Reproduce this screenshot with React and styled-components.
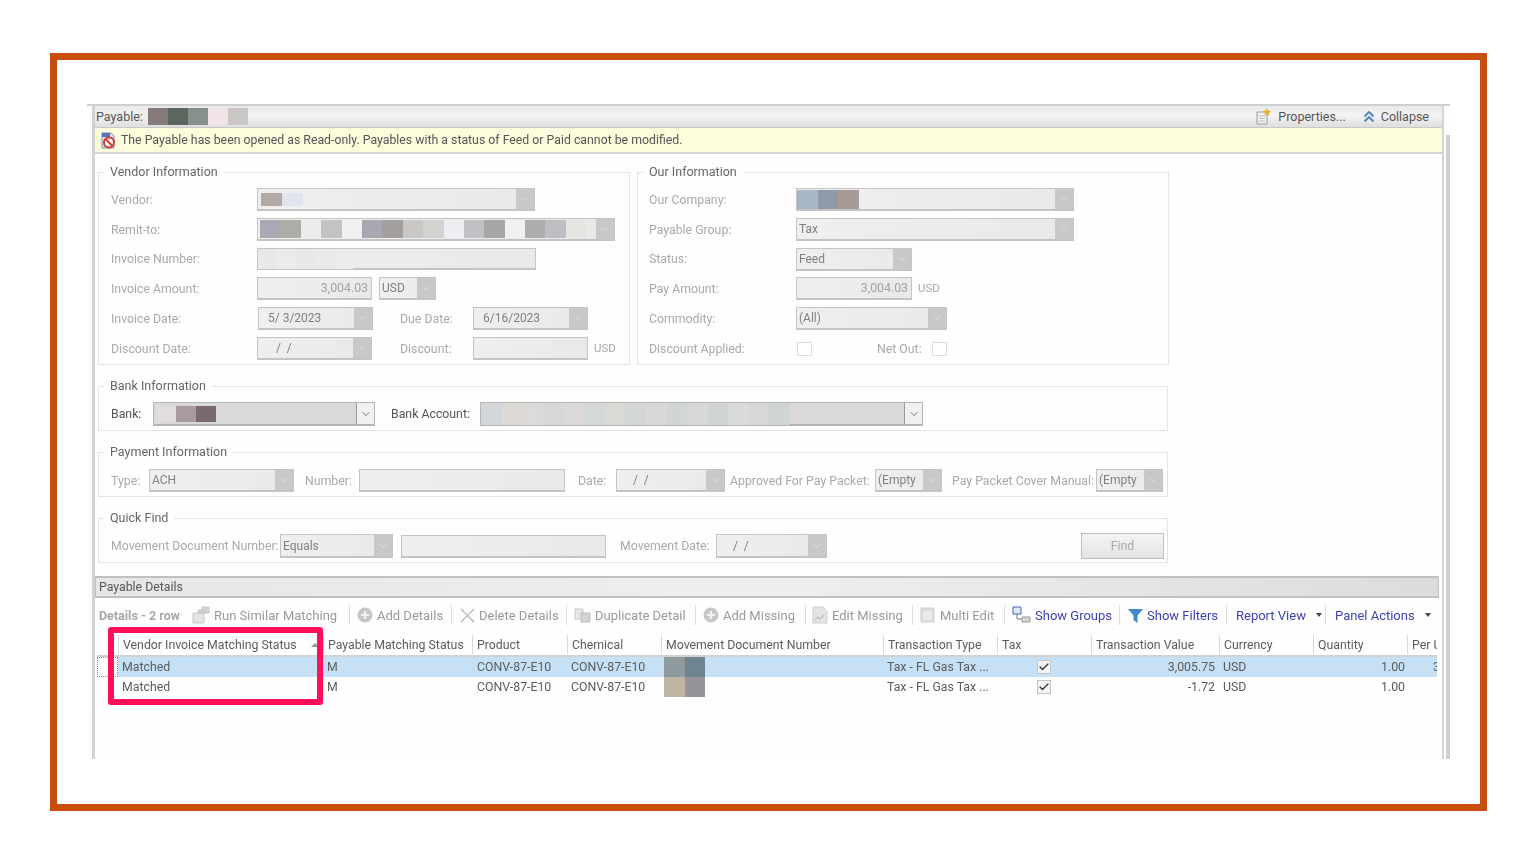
import React from 'react';
import styled, { createGlobalStyle, css } from 'styled-components';
import { ChevronDown, Check } from 'lucide-react';

const COLUMNS = '21px 205px 149px 95px 94px 222px 114px 94px 128px 94px 94px 30px';

const GlobalStyle = createGlobalStyle`
  html, body {
    margin: 0;
    background: #fff;
    font-family: Roboto, "Noto Sans", "Liberation Sans", sans-serif;
    font-size: 12px;
  }
  * { box-sizing: border-box; }
`;

const offset = css`
  margin-left: ${(p) => p.$ml || 0}px;
`;

const Frame = styled.div`
  width: 1437px;
  height: 758px;
  margin: 53px 0 0 50px;
  border: 7px solid #c94d0d;
  padding: 44px 0 0 30px;
  background: #fff;
`;

const Window = styled.div`
  position: relative;
  width: 1363px;
  height: 655px;
  overflow: hidden;
  background: #fefefe;
`;

const WindowBody = styled.div`
  display: flex;
  height: 100%;
  padding-left: 5px;
  border-top: 2px solid #cfcfcf;
  filter: blur(0.4px);
`;

const Panel = styled.div`
  width: 1352px;
  height: 100%;
  border-left: 3px solid #d2d2d2;
  border-right: 2px solid #d4d4d4;
  display: flex;
  flex-direction: column;
`;

const ScrollEdge = styled.div`
  width: 4px;
  margin: 29px 0 0 2px;
  background: #d0d0d0;
`;

const TitleBar = styled.div`
  height: 22px;
  display: flex;
  align-items: center;
  padding: 0 13px 0 1px;
  color: #555;
  background: linear-gradient(#e9e9e9, #f3f3f3 45%, #dedede);
  border-bottom: 1px solid #c9c9c9;
`;

const TitleText = styled.span`
  width: 53px;
  font-size: 12.5px;
`;

const TitleAction = styled.span`
  display: flex;
  align-items: center;
  gap: 6px;
  margin-left: ${(p) => p.$ml || 0}px;
  font-size: 12.5px;
`;

const PixRow = styled.span`
  display: flex;
  flex: none;
  height: ${(p) => p.$h || 16}px;
`;

const Pix = styled.span`
  display: block;
  flex: none;
  width: ${(p) => p.$w}px;
  background: ${(p) => p.$c};
`;

const Banner = styled.div`
  height: 26px;
  display: flex;
  align-items: center;
  gap: 4px;
  padding-left: 5px;
  color: #555;
  font-size: 12.3px;
  background: #fdfdde;
  border-bottom: 2px solid #d6d6d0;
`;

const Form = styled.div`
  padding: 11px 0 0 3px;
  display: flex;
  flex-direction: column;
`;

const TopGroups = styled.div`
  display: flex;
  gap: 7px;
`;

const Group = styled.fieldset`
  margin: ${(p) => (p.$first ? 0 : '14px 0 0')};
  width: ${(p) => p.$w || 1070}px;
  min-width: 0;
  padding: ${(p) => p.$pt || 9}px 3px ${(p) => p.$pb || 4}px ${(p) => p.$pl || 12}px;
  border: 1px solid #e3e3e3;
`;

const Legend = styled.legend`
  margin-left: ${(p) => p.$ml || -7}px;
  padding: 0 6px;
  height: 14px;
  line-height: 14px;
  color: #666;
  font-size: 12.5px;
`;

const FieldRow = styled.div`
  height: ${(p) => p.$h || 23}px;
  margin-bottom: ${(p) => (p.$last ? 0 : 7)}px;
  display: flex;
  align-items: center;
`;

const Label = styled.span`
  ${offset}
  flex: none;
  width: ${(p) => p.$w}px;
  color: ${(p) => (p.$dark ? '#555' : '#a9a9a9')};
  font-size: 12.3px;
  white-space: nowrap;
`;

const Unit = styled.span`
  ${offset}
  color: #a9a9a9;
  font-size: 11.5px;
  transform: translateY(-1px);
`;

const Control = styled.div`
  ${offset}
  flex: none;
  width: ${(p) => p.$w}px;
  height: ${(p) => p.$h || 23}px;
  display: flex;
  align-items: center;
  border: 1px solid ${(p) => (p.$dark ? '#b5b5b5' : '#c4c4c4')};
  border-bottom-width: 2px;
  background: ${(p) => (p.$dark ? '#d9d9d9' : 'linear-gradient(90deg, #efefef, #e9e9e9)')};
`;

const Value = styled.span`
  padding-left: ${(p) => p.$pad ?? 2}px;
  color: #808080;
  font-size: 12px;
  white-space: pre;
`;

const Amount = styled.span`
  margin-left: auto;
  padding-right: 3px;
  color: #a3a3a3;
  font-size: 12.3px;
`;

const Arrow = styled.span`
  margin-left: auto;
  flex: none;
  align-self: stretch;
  width: 18px;
  display: flex;
  align-items: center;
  justify-content: center;
  color: ${(p) => (p.$dark ? '#444' : '#e6e6e6')};
  background: ${(p) => (p.$dark ? '#f1f1f1' : '#c8c8c8')};
  border-left: ${(p) => (p.$dark ? '1px solid #999' : 'none')};
`;

const CheckBox = styled.span`
  ${offset}
  flex: none;
  width: 15px;
  height: 14px;
  border: 1px solid #dcdcdc;
  background: #fff;
`;

const FindButton = styled.button`
  margin-left: auto;
  width: 83px;
  height: 26px;
  padding: 0;
  font: inherit;
  font-size: 12.3px;
  color: #aaa;
  border: 1px solid #bdbdbd;
  background: linear-gradient(#f4f4f4, #e4e4e4);
`;

const DetailsBar = styled.div`
  margin-top: 13px;
  height: 22px;
  width: 1344px;
  display: flex;
  align-items: center;
  padding-left: 3px;
  color: #555;
  font-size: 12.3px;
  background: linear-gradient(90deg, #e6e6e6, #efefef 50%, #dcdcdc);
  border: 1px solid #c0c0c0;
  border-width: 2px 1px;
`;

const Toolbar = styled.div`
  height: 34px;
  margin-bottom: 3px;
  padding-left: 4px;
  display: flex;
  align-items: center;
  font-size: 13px;
  white-space: nowrap;
`;

const ToolCount = styled.span`
  width: 93px;
  font-weight: 700;
  color: #a2a8ae;
  font-size: 12.5px;
`;

const Tool = styled.span`
  flex: none;
  width: ${(p) => p.$w}px;
  height: 20px;
  padding-left: ${(p) => p.$pl ?? 7}px;
  display: flex;
  align-items: center;
  gap: 4px;
  color: ${(p) => (p.$link ? '#4141b4' : '#9a9a9a')};
  border-right: ${(p) => (p.$last ? 'none' : '1px solid #ddd')};
`;

const Caret = styled.span`
  margin-left: 6px;
  border: 3px solid transparent;
  border-top: 4px solid #444;
  border-bottom: 0;
`;

const Table = styled.div`
  width: 1340px;
  margin-left: 2px;
  overflow: hidden;
  color: #5c5c5c;
`;

const HeaderRow = styled.div`
  display: grid;
  grid-template-columns: ${COLUMNS};
  height: 22px;
  padding-bottom: 1px;
  border-bottom: 2px solid #d2d2d2;
`;

const HeaderCell = styled.div`
  display: flex;
  align-items: center;
  padding: 0 8px 0 4px;
  overflow: hidden;
  white-space: nowrap;
  font-size: 12.3px;
  border-left: ${(p) => (p.$plain ? 'none' : '1px solid #d8d8d8')};
`;

const SortMark = styled.span`
  margin-left: auto;
  margin-right: -4px;
  border: 4px solid transparent;
  border-bottom: 4px solid #999;
  border-top: 0;
`;

const Row = styled.div`
  display: grid;
  grid-template-columns: ${COLUMNS};
  height: 20px;
  & > *:not(:first-child) {
    background: ${(p) => (p.$selected ? '#c6e0f5' : 'transparent')};
  }
`;

const Cell = styled.div`
  display: flex;
  align-items: center;
  justify-content: ${(p) => p.$justify || 'flex-start'};
  padding: 0 ${(p) => p.$pr ?? 4}px 0 ${(p) => p.$pl ?? 4}px;
  overflow: hidden;
  white-space: nowrap;
  font-size: 12.3px;
`;

const RowMarker = styled.div`
  border: 1px dotted ${(p) => (p.$on ? '#888' : 'transparent')};
`;

const TableCheck = styled.span`
  width: 14px;
  height: 14px;
  display: flex;
  align-items: center;
  justify-content: center;
  color: #333;
  background: #f4f4f4;
  border: 1px solid #c4c4c4;
`;

const Highlight = styled.div`
  position: absolute;
  left: 21px;
  top: 523px;
  width: 215px;
  height: 78px;
  border: 6px solid #ff1059;
  border-radius: 3px;
  pointer-events: none;
`;

const IconSvg = styled.svg`
  flex: none;
  display: block;
`;

const WarnIcon = () => (
  <IconSvg width="17" height="17" viewBox="0 0 17 17">
    <path d="M2 1h9l3 3v12H2z" fill="#dfe6f2" stroke="#7f8fb5" />
    <path d="M2 1h8v4H2z" fill="#5b73b5" />
    <circle cx="9" cy="10.5" r="5" fill="#fff" stroke="#d83a2c" strokeWidth="2" />
    <path d="M5.5 7l7 7" stroke="#d83a2c" strokeWidth="2" />
  </IconSvg>
);

const PropertiesIcon = () => (
  <IconSvg width="17" height="17" viewBox="0 0 17 17">
    <path d="M2 4h10v12H2z" fill="#f3f3f3" stroke="#9a9a9a" />
    <path d="M4 8h6M4 10.5h6M4 13h6" stroke="#bbb" />
    <path d="M12 0l1.2 2.6 2.8.4-2 2 .5 2.8-2.5-1.4-2.5 1.4.5-2.8-2-2 2.800-.4z" fill="#e5b52c" />
  </IconSvg>
);

const CollapseIcon = () => (
  <IconSvg width="12" height="13" viewBox="0 0 12 13">
    <path d="M1.500 6.500L6 2l4.500 4.500M1.500 11.500L6 7l4.500 4.500" fill="none" stroke="#4d83b8" strokeWidth="1.800" />
  </IconSvg>
);

const RunIcon = () => (
  <IconSvg width="18" height="18" viewBox="0 0 18 18">
    <path d="M1 7h11v10H1z" fill="#e4e4e4" stroke="#c9c9c9" />
    <path d="M6 4h7v3H6zM10 1h7v6h-7z" fill="#d4d4d4" stroke="#c4c4c4" />
  </IconSvg>
);

const PlusIcon = () => (
  <IconSvg width="16" height="16" viewBox="0 0 16 16">
    <circle cx="8" cy="8" r="7.500" fill="#c6c6c6" />
    <path d="M8 4v8M4 8h8" stroke="#f2f2f2" strokeWidth="2.200" />
  </IconSvg>
);

const CrossIcon = () => (
  <IconSvg width="15" height="15" viewBox="0 0 15 15">
    <path d="M1 1l13 13M14 1L1 14" stroke="#bdbdbd" strokeWidth="1.500" />
  </IconSvg>
);

const DuplicateIcon = () => (
  <IconSvg width="17" height="15" viewBox="0 0 17 15">
    <path d="M1 1h8v10H1z" fill="#e8e8e8" stroke="#c8c8c8" />
    <path d="M7 5h9v9H7z" fill="#d2d2d2" stroke="#bdbdbd" />
  </IconSvg>
);

const EditIcon = () => (
  <IconSvg width="16" height="18" viewBox="0 0 16 18">
    <path d="M1 1h10l4 4v12H1z" fill="#e4e4e4" stroke="#cecece" />
    <path d="M3 14l3-3 2 2 4-4" fill="none" stroke="#c2c2c2" strokeWidth="1.400" />
  </IconSvg>
);

const MultiIcon = () => (
  <IconSvg width="16" height="16" viewBox="0 0 16 16">
    <path d="M1 1h13v14H1z" fill="#dcdcdc" stroke="#cfcfcf" />
    <path d="M3 4h9v9H3z" fill="#e9e9e9" />
  </IconSvg>
);

const GroupsIcon = () => (
  <IconSvg width="19" height="18" viewBox="0 0 19 18">
    <path d="M1 1h8v7H1z" fill="#dfe7f7" stroke="#4a63b5" />
    <path d="M5 8v5h5" fill="none" stroke="#777" />
    <path d="M10 11h8v5h-8z" fill="#d6d6d6" stroke="#999" />
  </IconSvg>
);

const FilterIcon = () => (
  <IconSvg width="15" height="15" viewBox="0 0 15 15">
    <path d="M0 1h15L9.500 7.500V15L5.500 12V7.500z" fill="#3f88cc" />
  </IconSvg>
);

const SmallCheck = () => <Check size={12} strokeWidth={2.5} />;

const Combo = ({ w, ml, h, dark, value, pad, children }) => (
  <Control $w={w} $ml={ml} $h={h} $dark={dark}>
    {children}
    {value !== undefined && <Value $pad={pad}>{value}</Value>}
    <Arrow $dark={dark}>
      <ChevronDown size={12} strokeWidth={1.5} />
    </Arrow>
  </Control>
);

const Blocks = ({ colors, w, h, ml }) => (
  <PixRow $h={h} style={ml ? { marginLeft: ml } : undefined}>
    {colors.map((c, i) => (
      <Pix key={i} $w={w} $c={c} />
    ))}
  </PixRow>
);

const REMIT = ['#a9a9b6', '#adada8', '#ececec', '#c3c3c2', '#f0f0f0', '#a8a8b3', '#a39f9c', '#c9c8c7', '#d2d2ce', '#eeeef2', '#c1c1c6', '#a8a6a6', '#f0f0f0', '#aeacac', '#bcbec2', '#e4e6e2'];
const INVOICE = ['#e8e8e8', '#ebebeb', '#e6e8ea', '#ebe9ea', '#ecebed'];
const ACCOUNT = ['#d3d7d9', '#dcd9d5', '#dddbd9', '#d6d8d6', '#dbd8d8', '#d4d8d6', '#d9d9d6', '#d2d6d6', '#d8d8d8', '#d1d6d5', '#d6d9d8', '#d0d4d4', '#d9dbdb', '#d6d8d8', '#cfd4d4'];

const TOOLS = [
  { label: 'Add Details', icon: <PlusIcon />, w: 102 },
  { label: 'Delete Details', icon: <CrossIcon />, w: 115, pl: 8 },
  { label: 'Duplicate Detail', icon: <DuplicateIcon />, w: 129 },
  { label: 'Add Missing', icon: <PlusIcon />, w: 110 },
  { label: 'Edit Missing', icon: <EditIcon />, w: 107, pl: 6 },
  { label: 'Multi Edit', icon: <MultiIcon />, w: 92 },
  { label: 'Show Groups', icon: <GroupsIcon />, w: 115, link: true },
  { label: 'Show Filters', icon: <FilterIcon />, w: 107, link: true, pl: 8 },
];

const HEADERS = ['Payable Matching Status', 'Product', 'Chemical', 'Movement Document Number', 'Transaction Type', 'Tax', 'Transaction Value', 'Currency', 'Quantity', 'Per Unit'];

const DetailRow = ({ selected, value, docColors, perUnit }) => (
  <Row $selected={selected}>
    <RowMarker $on={selected} />
    <Cell>Matched</Cell>
    <Cell>M</Cell>
    <Cell $pl={5}>CONV-87-E10</Cell>
    <Cell>CONV-87-E10</Cell>
    <Cell $pl={3}><Blocks colors={docColors} w={20.5} h={20} /></Cell>
    <Cell>Tax - FL Gas Tax ...</Cell>
    <Cell $justify="center"><TableCheck><SmallCheck /></TableCheck></Cell>
    <Cell $justify="flex-end">{value}</Cell>
    <Cell>USD</Cell>
    <Cell $justify="flex-end" $pr={2}>1.00</Cell>
    <Cell $pl={26} $pr={0}>{perUnit}</Cell>
  </Row>
);

const App = () => (
  <>
    <GlobalStyle />
    <Frame>
      <Window>
        <WindowBody>
          <Panel>
            <TitleBar>
              <TitleText>Payable:</TitleText>
              <Blocks colors={['#857b7b', '#5d665e', '#88908f', '#f2e4e6', '#c9c6c3']} w={20} h={17} />
              <TitleAction $ml={1007}><PropertiesIcon />Properties...</TitleAction>
              <TitleAction $ml={17}><CollapseIcon />Collapse</TitleAction>
            </TitleBar>
            <Banner>
              <WarnIcon />
              The Payable has been opened as Read-only. Payables with a status of Feed or Paid cannot be modified.
            </Banner>
            <Form>
              <TopGroups>
                <Group $first $w={532}>
                  <Legend>Vendor Information</Legend>
                  <FieldRow>
                    <Label $w={146}>Vendor:</Label>
                    <Combo w={278}><Blocks colors={['#b5a9a6', '#e2e4ee']} w={21} h={13} ml={3} /></Combo>
                  </FieldRow>
                  <FieldRow>
                    <Label $w={146}>Remit-to:</Label>
                    <Combo w={358}><Blocks colors={REMIT} w={20.400} h={18} ml={2} /></Combo>
                  </FieldRow>
                  <FieldRow $h={22}>
                    <Label $w={146}>Invoice Number:</Label>
                    <Control $w={279} $h={22}><Blocks colors={INVOICE} w={19} h={20} /></Control>
                  </FieldRow>
                  <FieldRow>
                    <Label $w={146}>Invoice Amount:</Label>
                    <Control $w={115}><Amount>3,004.03</Amount></Control>
                    <Combo w={57} ml={7} value="USD" />
                  </FieldRow>
                  <FieldRow>
                    <Label $w={147}>Invoice Date:</Label>
                    <Combo w={115} value="5/ 3/2023" pad={9} />
                    <Label $w={73} $ml={27}>Due Date:</Label>
                    <Combo w={115} value="6/16/2023" pad={9} />
                  </FieldRow>
                  <FieldRow $last>
                    <Label $w={146}>Discount Date:</Label>
                    <Combo w={115} value="  /  /" pad={12} />
                    <Label $w={73} $ml={28}>Discount:</Label>
                    <Control $w={115} />
                    <Unit $ml={6}>USD</Unit>
                  </FieldRow>
                </Group>
                <Group $first $w={532} $pl={11}>
                  <Legend $ml={-6}>Our Information</Legend>
                  <FieldRow>
                    <Label $w={147}>Our Company:</Label>
                    <Combo w={278}><Blocks colors={['#a6b6c5', '#8f99a7', '#a89a97']} w={20.500} h={19} /></Combo>
                  </FieldRow>
                  <FieldRow>
                    <Label $w={147}>Payable Group:</Label>
                    <Combo w={278} value="Tax" />
                  </FieldRow>
                  <FieldRow $h={22}>
                    <Label $w={147}>Status:</Label>
                    <Combo w={116} value="Feed" />
                  </FieldRow>
                  <FieldRow>
                    <Label $w={147}>Pay Amount:</Label>
                    <Control $w={116}><Amount>3,004.03</Amount></Control>
                    <Unit $ml={6}>USD</Unit>
                  </FieldRow>
                  <FieldRow>
                    <Label $w={147}>Commodity:</Label>
                    <Combo w={151} value="(All)" />
                  </FieldRow>
                  <FieldRow $last>
                    <Label $w={147}>Discount Applied:</Label>
                    <CheckBox $ml={1} />
                    <Label $w={55} $ml={65}>Net Out:</Label>
                    <CheckBox />
                  </FieldRow>
                </Group>
              </TopGroups>
              <Group>
                <Legend>Bank Information</Legend>
                <FieldRow $h={24} $last>
                  <Label $w={42} $dark>Bank:</Label>
                  <Combo w={222} h={24} dark><Blocks colors={['#e2dcdc', '#a99a9e', '#7a6a70']} w={20} h={16} ml={2} /></Combo>
                  <Label $w={89} $ml={16} $dark>Bank Account:</Label>
                  <Combo w={443} h={24} dark><Blocks colors={ACCOUNT} w={20.600} h={22} /></Combo>
                </FieldRow>
              </Group>
              <Group $pt={10}>
                <Legend>Payment Information</Legend>
                <FieldRow $last>
                  <Label $w={38}>Type:</Label>
                  <Combo w={145} value="ACH" />
                  <Label $w={54} $ml={11}>Number:</Label>
                  <Control $w={206} />
                  <Label $w={38} $ml={13}>Date:</Label>
                  <Combo w={109} value="  /  /" pad={10} />
                  <Label $w={145} $ml={5}>Approved For Pay Packet:</Label>
                  <Combo w={67} value="(Empty" />
                  <Label $w={144} $ml={10}>Pay Packet Cover Manual:</Label>
                  <Combo w={67} value="(Empty" />
                </FieldRow>
              </Group>
              <Group>
                <Legend>Quick Find</Legend>
                <FieldRow $h={24} $last>
                  <Label $w={169}>Movement Document Number:</Label>
                  <Combo w={113} h={24} value="Equals" />
                  <Control $w={205} $ml={8} $h={23} />
                  <Label $w={96} $ml={14}>Movement Date:</Label>
                  <Combo w={111} h={24} value="  /  /" pad={10} />
                  <FindButton>Find</FindButton>
                </FieldRow>
              </Group>
            </Form>
            <DetailsBar>Payable Details</DetailsBar>
            <Toolbar>
              <ToolCount>Details - 2 row</ToolCount>
              <Tool $w={158} $pl={0}><RunIcon />Run Similar Matching</Tool>
              {TOOLS.map((t) => (
                <Tool key={t.label} $w={t.w} $pl={t.pl} $link={t.link}>{t.icon}{t.label}</Tool>
              ))}
              <Tool $w={99} $pl={9} $link>Report View<Caret /></Tool>
              <Tool $w={105} $pl={9} $link $last>Panel Actions<Caret /></Tool>
            </Toolbar>
            <Table>
              <HeaderRow>
                <HeaderCell $plain />
                <HeaderCell>Vendor Invoice Matching Status<SortMark /></HeaderCell>
                {HEADERS.map((h) => (
                  <HeaderCell key={h}>{h}</HeaderCell>
                ))}
              </HeaderRow>
              <DetailRow selected value="3,005.75" docColors={['#8e9a9c', '#6f8391']} perUnit="3,005.75" />
              <DetailRow value="-1.72" docColors={['#c0b5a4', '#96949a']} />
            </Table>
          </Panel>
          <ScrollEdge />
        </WindowBody>
        <Highlight />
      </Window>
    </Frame>
  </>
);

export default App;
